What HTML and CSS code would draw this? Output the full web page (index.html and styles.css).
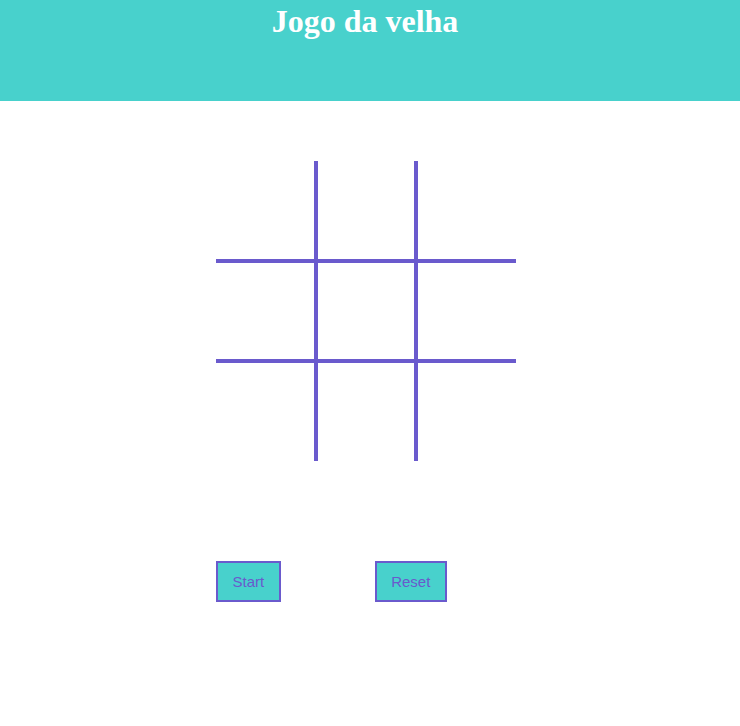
FILE: index.html
```html
<!DOCTYPE html>
<html lang="pt">
<head>
<meta charset="utf-8">
<title>Jogo da velha</title>
<link rel="stylesheet" href="styles.css">
</head>
<body>
<header class="topo">
  <h1 class="titulo">Jogo da velha</h1>
</header>
<main class="jogo">
  <div class="tabuleiro">
    <div class="casa c1"></div>
    <div class="casa c2"></div>
    <div class="casa c3"></div>
    <div class="casa c4"></div>
    <div class="casa c5"></div>
    <div class="casa c6"></div>
    <div class="casa c7"></div>
    <div class="casa c8"></div>
    <div class="casa c9"></div>
  </div>
  <div class="acoes">
    <button class="botao">Start</button>
    <button class="botao">Reset</button>
  </div>
</main>
</body>
</html>
```
FILE: styles.css
```css
html, body {
  margin: 0;
  padding: 0;
  background: #ffffff;
}

.topo {
  height: 101px;
  background: #48d1cc;
  padding-right: 10px;
  box-sizing: border-box;
}

.titulo {
  margin: 0;
  padding-top: 3px;
  text-align: center;
  font-family: "Liberation Serif", "Times New Roman", serif;
  font-weight: bold;
  font-size: 32px;
  line-height: 37px;
  color: #ffffff;
}

.jogo {
  padding-left: 216px;
  padding-top: 60px;
}

.tabuleiro {
  display: grid;
  grid-template-columns: repeat(3, 100px);
  grid-template-rows: repeat(3, 100px);
  width: 300px;
}

.casa {
  box-sizing: border-box;
  border: 0 solid #6a5acd;
}

.c1, .c2, .c4, .c5, .c7, .c8 { border-right-width: 2px; }
.c2, .c3, .c5, .c6, .c8, .c9 { border-left-width: 2px; }
.c1, .c2, .c3, .c4, .c5, .c6 { border-bottom-width: 2px; }
.c4, .c5, .c6, .c7, .c8, .c9 { border-top-width: 2px; }

.acoes {
  display: flex;
  gap: 94px;
  margin-top: 100px;
}

.botao {
  margin: 0;
  background: #48d1cc;
  border: 2px solid #6a5acd;
  color: #6a5acd;
  font-family: "Liberation Sans", Arial, sans-serif;
  font-size: 15px;
  line-height: 17px;
  padding: 10px 14.5px;
  cursor: pointer;
}
```
